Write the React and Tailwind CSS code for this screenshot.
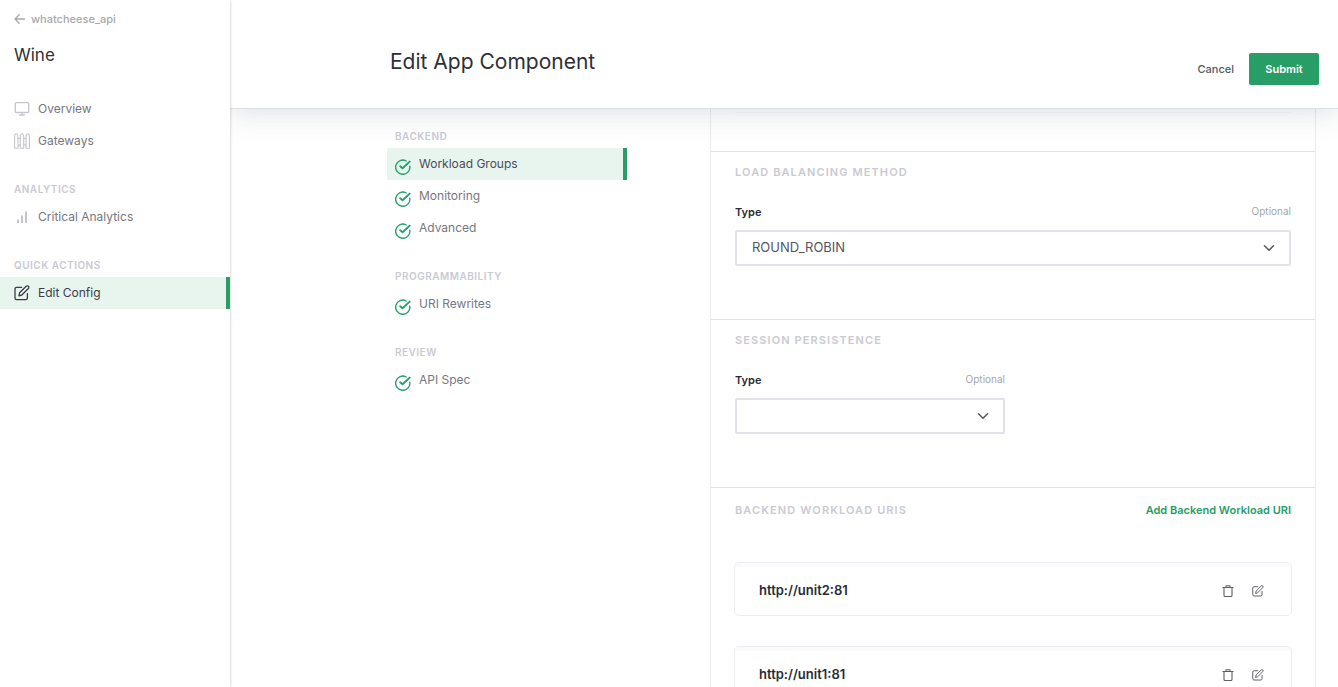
import React from "react";

const stroke = { fill: "none", stroke: "currentColor", strokeLinecap: "round", strokeLinejoin: "round" };

function BackArrow() {
  return (
    <svg className="h-3 w-3 shrink-0" viewBox="0 0 12 12" strokeWidth="1.3" {...stroke} aria-hidden="true">
      <path d="M10.500 6H1.200M5.200 1.800 1 6l4.200 4.200" />
    </svg>
  );
}

function MonitorIcon() {
  return (
    <svg className="h-4 w-4 shrink-0" viewBox="0 0 16 16" strokeWidth="1.300" {...stroke} aria-hidden="true">
      <rect x="1.300" y="1.600" width="13.400" height="9.900" rx="1.200" />
      <path d="M8 11.600v2M5.500 14h5" />
    </svg>
  );
}

function FenceIcon() {
  return (
    <svg className="h-4 w-4 shrink-0" viewBox="0 0 16 16" strokeWidth="1.100" {...stroke} aria-hidden="true">
      <path d="M.6 15.200V4.500C.6 2.500 1.500.7 2.300.7S4 2.500 4 4.500v10.700zM6.300 15.200V4.500C6.300 2.500 7.200.7 8 .7s1.700 1.800 1.700 3.800v10.700zM12 15.200V4.500c0-2 .9-3.800 1.700-3.800s1.700 1.800 1.700 3.800v10.700z" />
      <path d="M4 5.500h2.300M4 12h2.300M9.700 5.500H12M9.700 12H12" />
    </svg>
  );
}

function BarsIcon() {
  return (
    <svg className="h-4 w-4 shrink-0" viewBox="0 0 16 16" fill="currentColor" aria-hidden="true">
      <path d="M3 10.500h2V14H3zM7 6.500h2V14H7zM11 2.500h2V14h-2z" />
    </svg>
  );
}

function EditIcon({ className, weight }) {
  return (
    <svg className={className} viewBox="0 0 16 16" strokeWidth={weight} {...stroke} aria-hidden="true">
      <path d="M7.700 2.300H2.600c-.9 0-1.600.7-1.600 1.600v9.200c0 .9.7 1.600 1.600 1.600h9.200c.9 0 1.600-.7 1.600-1.600V8.600" />
      <path d="m4.900 10.800.7-3 6.600-6.500a1.550 1.550 0 0 1 2.200 0 1.550 1.550 0 0 1 0 2.200l-6.600 6.500z" />
    </svg>
  );
}

function TrashIcon() {
  return (
    <svg className="h-3 w-3" viewBox="0 0 12 12" strokeWidth="1.100" {...stroke} aria-hidden="true">
      <path d="M.9 2.500h10.200M4 2.300V.8h4v1.500M2 2.700v7.600c0 .7.500 1.200 1.200 1.200h5.600c.7 0 1.200-.5 1.200-1.200V2.700" />
    </svg>
  );
}

function DoneIcon() {
  return (
    <svg className="h-4 w-4" viewBox="0 0 16 16" {...stroke} aria-hidden="true">
      <path strokeWidth="1.400" d="M11.200 2A7.100 7.100 0 1 0 14.800 7.300" />
      <path strokeWidth="1.900" d="M5.200 7.200 7.500 9.300 14.700 2.600" />
    </svg>
  );
}

function Chevron() {
  return (
    <svg className="pointer-events-none absolute top-3 right-4 h-3 w-3 text-[#55555f]" viewBox="0 0 12 12" strokeWidth="1.500" {...stroke} aria-hidden="true">
      <path d="M1.500 3.700 6 8.200l4.500-4.500" />
    </svg>
  );
}

function GroupHeading({ children, className = "" }) {
  return <h2 className={`pb-1 text-[10px] leading-4 font-semibold tracking-wider text-[#cacad3] uppercase ${className}`}>{children}</h2>;
}

function SideLink({ icon, children, active }) {
  return (
    <a
      href="#"
      aria-current={active ? "page" : undefined}
      className={
        active
          ? "flex h-8 items-center gap-2 border-r-4 border-[#289e66] bg-[#e8f5ee] pl-3.5 text-xs text-[#3c3c48]"
          : "flex h-8 items-center gap-2 pl-3.5 text-xs text-[#777780]"
      }
    >
      <span className={active ? "" : "text-[#c5c5cc]"}>{icon}</span>
      {children}
    </a>
  );
}

function Step({ children, active }) {
  return (
    <a
      href="#"
      aria-current={active ? "step" : undefined}
      className={
        active
          ? "flex h-8 items-center gap-2 border-r-4 border-[#289e66] bg-[#e8f5ee] pl-2 text-xs text-[#4b4b55]"
          : "flex h-8 items-center gap-2 pl-2 text-xs text-[#777780]"
      }
    >
      <span className="pt-[5px] text-[#22a26b]">
        <DoneIcon />
      </span>
      {children}
    </a>
  );
}

function SectionTitle({ children }) {
  return <h2 className="text-[11px] leading-4 font-semibold tracking-widest text-[#cacad3] uppercase">{children}</h2>;
}

function TypeSelect({ id, options, value }) {
  return (
    <div className="pt-6">
      <div className="flex items-start justify-between">
        <label htmlFor={id} className="text-[11px] leading-4 font-semibold text-[#2b2b35]">Type</label>
        <span className="text-[10px] leading-[14px] text-[#a5a5ae]">Optional</span>
      </div>
      <div className="relative mt-2.5">
        <select
          id={id}
          defaultValue={value}
          className="block h-9 w-full appearance-none rounded-xs border-2 border-[#e2e2ea] bg-white pr-10 pl-[15px] text-[13px] text-[#55555f]"
        >
          {options.map((o) => (
            <option key={o} value={o}>{o}</option>
          ))}
        </select>
        <Chevron />
      </div>
    </div>
  );
}

function UriCard({ uri }) {
  return (
    <li className="flex h-[52px] items-center rounded-sm border-t-4 border-[#f9fafb] pr-[27px] pl-6 shadow-[0_0_0_1px_#ededef]">
      <span className="flex-1 text-[13px] font-semibold text-[#2b2b33]">{uri}</span>
      <div className="flex gap-[18px] text-[#5d5d66]">
        <button type="button" aria-label={`Delete ${uri}`}><TrashIcon /></button>
        <button type="button" aria-label={`Edit ${uri}`}><EditIcon className="h-3 w-3" weight="1.300" /></button>
      </div>
    </li>
  );
}

export default function App() {
  return (
    <div className="flex h-screen overflow-hidden bg-white font-['Inter',sans-serif] text-[#2f2f36]">
      <aside className="z-20 w-[230px] shrink-0 bg-white shadow-[0_0_3px_rgba(0,0,0,0.25)]">
        <a href="#" className="flex items-center gap-[5px] pt-[11px] pl-3.5 text-[11px] leading-4 font-medium text-[#a8a8ac]">
          <BackArrow />
          whatcheese_api
        </a>
        <p className="pt-4 pb-[26px] pl-3.5 text-[17px] leading-6">Wine</p>
        <nav aria-label="Component">
          <SideLink icon={<MonitorIcon />}>Overview</SideLink>
          <SideLink icon={<FenceIcon />}>Gateways</SideLink>
          <GroupHeading className="pt-6 pl-3.5">Analytics</GroupHeading>
          <SideLink icon={<BarsIcon />}>Critical Analytics</SideLink>
          <GroupHeading className="pt-6 pl-3.5">Quick Actions</GroupHeading>
          <SideLink active icon={<EditIcon className="h-4 w-4 shrink-0" weight="1.300" />}>Edit Config</SideLink>
        </nav>
      </aside>

      <div className="flex min-w-0 flex-1 flex-col">
        <header className="z-10 flex shrink-0 items-start justify-between border-b border-[#dde0e4] bg-white pt-12 pr-[19px] pb-[23px] pl-40 shadow-[0_4px_28px_rgba(50,60,80,0.16)]">
          <h1 className="text-[21px] leading-7">Edit App Component</h1>
          <div className="flex items-center gap-[15px] pt-[5px] text-[11px]">
            <button type="button" className="font-medium text-[#55555f]">Cancel</button>
            <button type="submit" form="component-form" className="h-8 min-w-[70px] rounded-xs bg-[#289e66] px-4 font-semibold text-white">Submit</button>
          </div>
        </header>

        <main className="flex min-h-0 flex-1 overflow-hidden pr-[22px] pl-[157px]">
          <nav aria-label="Steps" className="w-60 shrink-0 pt-[19px]">
            <GroupHeading className="pl-2">Backend</GroupHeading>
            <Step active>Workload Groups</Step>
            <Step>Monitoring</Step>
            <Step>Advanced</Step>
            <GroupHeading className="pt-6 pl-2">Programmability</GroupHeading>
            <Step>URI Rewrites</Step>
            <GroupHeading className="pt-6 pl-2">Review</GroupHeading>
            <Step>API Spec</Step>
          </nav>

          <form id="component-form" onSubmit={(e) => e.preventDefault()} className="ml-[83px] min-w-0 flex-1 self-start border-x border-[#ececef]">
            <div className="h-[42px] px-6">
              <div className="h-1 border-b border-[#f7f7f9]" />
            </div>

            <section className="border-t border-[#e2e2e6] px-6 pt-3 pb-[53px]">
              <SectionTitle>Load Balancing Method</SectionTitle>
              <TypeSelect id="lb-type" value="ROUND_ROBIN" options={["ROUND_ROBIN"]} />
            </section>

            <section className="border-t border-[#e2e2e6] px-6 pt-3 pb-[53px]">
              <SectionTitle>Session Persistence</SectionTitle>
              <div className="grid grid-cols-2 gap-4">
                <TypeSelect id="session-type" value="" options={[""]} />
              </div>
            </section>

            <section className="border-t border-[#e2e2e6] px-6 pt-3.5 pb-8">
              <div className="flex items-center justify-between">
                <SectionTitle>Backend Workload URIs</SectionTitle>
                <button type="button" className="text-[11px] leading-4 font-semibold text-[#289e66]">Add Backend Workload URI</button>
              </div>
              <ul className="flex flex-col gap-8 pt-[45px]">
                <UriCard uri="http://unit2:81" />
                <UriCard uri="http://unit1:81" />
              </ul>
            </section>
          </form>
        </main>
      </div>
    </div>
  );
}
